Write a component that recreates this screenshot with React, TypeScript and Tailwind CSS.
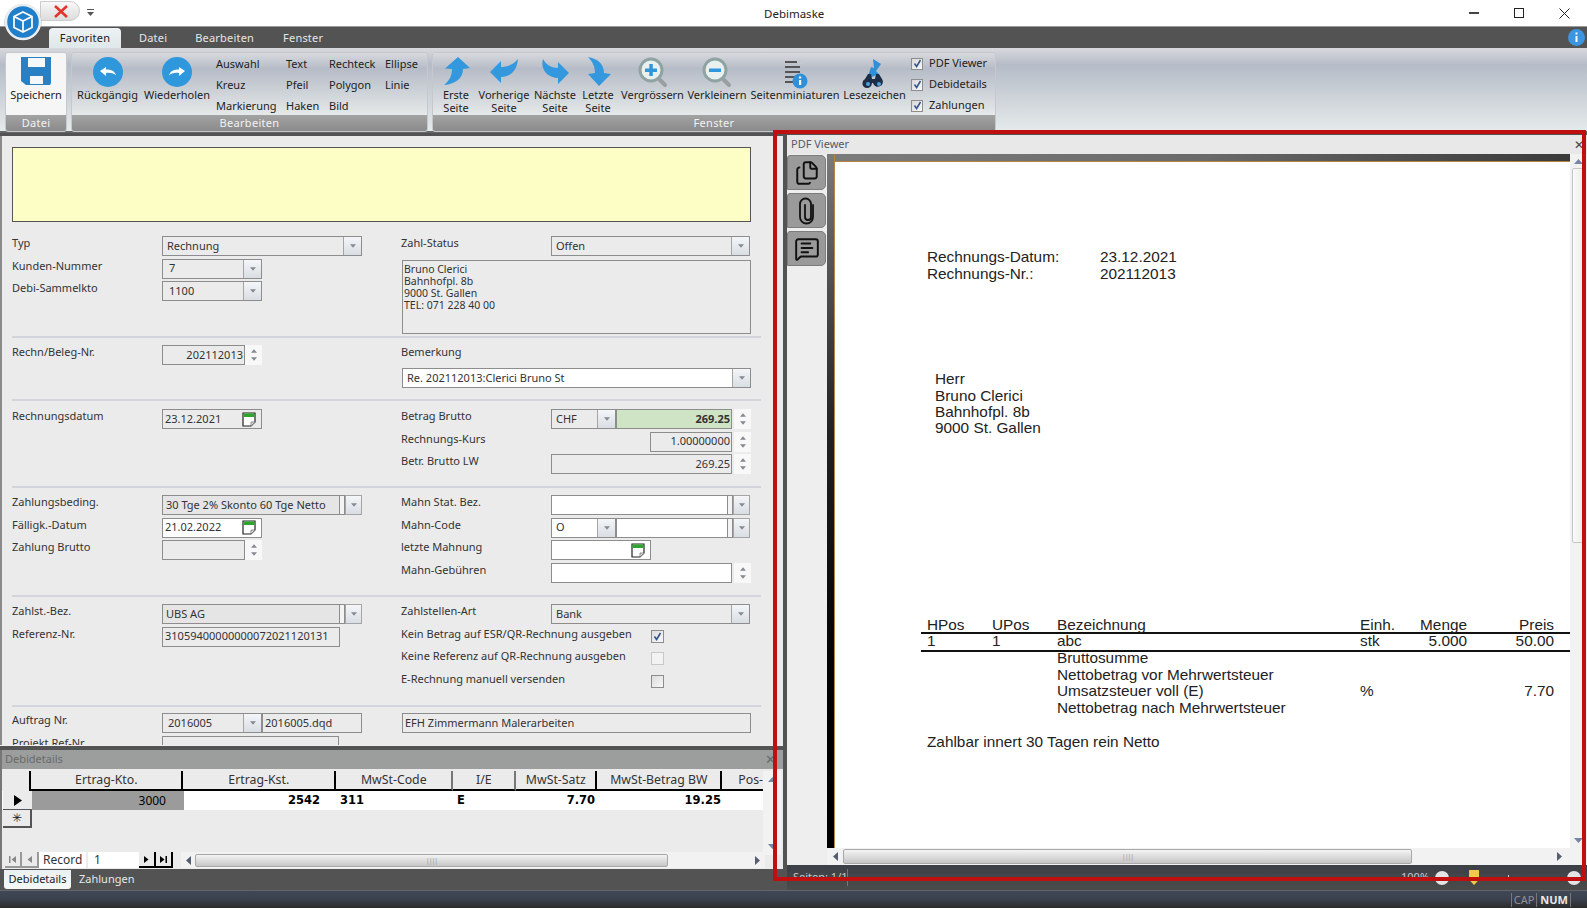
import type { ReactNode } from "react";
import { Files, MessageSquareText } from "lucide-react";

function ArrowDown({ className = "fill-[#858a92]" }: { className?: string }) {
	return (
		<svg width="6" height="4" viewBox="0 0 7 4" className={className}>
			<path d="M0 0h7L3.5 4z" />
		</svg>
	);
}

function ArrowUp() {
	return (
		<svg width="6" height="4" viewBox="0 0 7 4" className="fill-[#858a92]">
			<path d="M0 4h7L3.5 0z" />
		</svg>
	);
}

function Calendar() {
	return (
		<svg width="14" height="15" viewBox="0 0 14 15" className="shrink-0">
			<path d="M1 1h12v9l-4 4H1z" fill="#fff" stroke="#222" strokeWidth="1.2" />
			<rect x="1.5" y="1.5" width="11" height="3.5" fill="#2fa52f" />
			<path d="M9 14v-4h4" fill="#ddd" stroke="#777" strokeWidth="0.8" />
		</svg>
	);
}

function DropButton({ w = "w-[18px]" }: { w?: string }) {
	return (
		<div
			className={`${w} shrink-0 h-full flex items-center justify-center border-l border-[#a5a5a5] bg-linear-to-b from-[#f4f6f8] to-[#d9dee4]`}
		>
			<ArrowDown />
		</div>
	);
}

function Combo({
	value,
	w,
	white = false,
	align = "pl-[4px]",
}: {
	value?: string;
	w: string;
	white?: boolean;
	align?: string;
}) {
	return (
		<div
			className={`${w} h-[20px] flex items-center border border-[#8d8d8d] ${white ? "bg-white" : "bg-[#ebebeb]"}`}
		>
			<span className={`flex-1 truncate ${align}`}>{value}</span>
			<DropButton />
		</div>
	);
}

// combo whose text box and arrow button are split by a small strip
function SplitCombo({ value, w, white = false }: { value?: string; w: string; white?: boolean }) {
	return (
		<div className={`${w} h-[20px] flex`}>
			<div
				className={`flex-1 flex items-center pl-[3px] border border-[#8d8d8d] ${white ? "bg-white" : "bg-[#e5e5e5]"}`}
			>
				{value}
			</div>
			<div className="w-[5px] border-y border-r border-[#8d8d8d] bg-[#f4f4f4]" />
			<div className="w-[17px] h-full border-y border-r border-[#a5a5a5]">
				<DropButton w="w-full" />
			</div>
		</div>
	);
}

function Input({
	value,
	w,
	white = false,
	right = false,
	bold = false,
	bg,
}: {
	value?: string;
	w: string;
	white?: boolean;
	right?: boolean;
	bold?: boolean;
	bg?: string;
}) {
	return (
		<div
			className={`${w} h-[20px] flex items-center border border-[#8d8d8d] ${bg ?? (white ? "bg-white" : "bg-[#ebebeb]")} ${right ? "justify-end pr-[1px]" : "pl-[2px]"} ${bold ? "font-bold" : ""}`}
		>
			{value}
		</div>
	);
}

function Spinner() {
	return (
		<div className="w-[17px] h-[20px] shrink-0 flex flex-col items-center justify-around py-[2px] bg-[#f8f8f8]">
			<ArrowUp />
			<ArrowDown />
		</div>
	);
}

function DateField({ value, white = false }: { value?: string; white?: boolean }) {
	return (
		<div
			className={`w-[100px] h-[20px] flex items-center justify-between pl-[2px] pr-[5px] border border-[#8d8d8d] ${white ? "bg-white" : "bg-[#ebebeb]"}`}
		>
			<span>{value}</span>
			<Calendar />
		</div>
	);
}

function Row({ label, children }: { label: string; children?: ReactNode }) {
	return (
		<div className="h-[22.5px] flex items-start">
			<div className="w-[150px] shrink-0 leading-[14px] whitespace-nowrap">{label}</div>
			<div className="flex">{children}</div>
		</div>
	);
}

function Section({
	h,
	pt,
	left,
	right,
	last = false,
}: {
	h: string;
	pt: string;
	left: ReactNode;
	right: ReactNode;
	last?: boolean;
}) {
	return (
		<div className={`${h} ${pt} flex ${last ? "" : "border-b-2 border-[#d4d4dc]"}`}>
			<div className="w-[389px] shrink-0">{left}</div>
			<div className="flex-1">{right}</div>
		</div>
	);
}

function CheckRow({ label, checked = false, light = false }: { label: string; checked?: boolean; light?: boolean }) {
	return (
		<div className="h-[22.5px] flex items-start">
			<div className="w-[250px] shrink-0 leading-[14px] whitespace-nowrap">{label}</div>
			<div
				className={`w-[13px] h-[13px] mt-[3px] flex items-center justify-center border ${light ? "border-[#c8c8c8] bg-[#f3f3f3]" : "border-[#8d8d8d] bg-linear-to-br from-[#dcdcdc] to-[#f8f8f8]"}`}
			>
				{checked && (
					<svg width="9" height="9" viewBox="0 0 9 9" fill="none" stroke="#33558f" strokeWidth="1.6">
						<path d="M1.5 4.5 3.6 7.5 7.5 1" />
					</svg>
				)}
			</div>
		</div>
	);
}

function FormPane() {
	return (
		<div className="h-[609px] overflow-hidden bg-[#ebebeb] border-l-2 border-[#8a8a8a] pl-[10px] text-[#333] text-[11px]">
			<div className="pt-[11px] w-[739px]">
				<div className="h-[75px] bg-[#fdfdc6] border border-[#555]" />
			</div>
			<div className="w-[749px] mt-[14px]">
				<Section
					h="h-[102px]"
					pt=""
					left={
						<>
							<Row label="Typ">
								<Combo w="w-[200px]" value="Rechnung" />
							</Row>
							<Row label="Kunden-Nummer">
								<Combo w="w-[100px]" value="7" align="pl-[6px]" />
							</Row>
							<Row label="Debi-Sammelkto">
								<Combo w="w-[100px]" value="1100" align="pl-[6px]" />
							</Row>
						</>
					}
					right={
						<>
							<Row label="Zahl-Status">
								<Combo w="w-[199px]" value="Offen" />
							</Row>
							<div className="ml-[1px] w-[349px] h-[74px] mt-[1px] border border-[#8d8d8d] bg-[#ebebeb] pl-[1px] pt-[2px] leading-[12px] text-[10.5px]">
								<div>Bruno Clerici</div>
								<div>Bahnhofpl. 8b</div>
								<div>9000 St. Gallen</div>
								<div>TEL: 071 228 40 00</div>
							</div>
						</>
					}
				/>
				<Section
					h="h-[63px]"
					pt="pt-[7px]"
					left={
						<Row label="Rechn/Beleg-Nr.">
							<Input w="w-[83px]" value="202112013" right />
							<Spinner />
						</Row>
					}
					right={
						<>
							<div className="leading-[14px] h-[23px]">Bemerkung</div>
							<div className="ml-[1px]">
								<Combo w="w-[349px]" white value="Re. 202112013:Clerici Bruno St" />
							</div>
						</>
					}
				/>
				<Section
					h="h-[87px]"
					pt="pt-[8px]"
					left={
						<Row label="Rechnungsdatum">
							<DateField value="23.12.2021" />
						</Row>
					}
					right={
						<>
							<Row label="Betrag Brutto">
								<Combo w="w-[65px]" value="CHF" />
								<Input w="w-[116px]" value="269.25" right bold bg="bg-[#cfe4c4]" />
								<div className="w-[2px]" />
								<Spinner />
							</Row>
							<Row label="Rechnungs-Kurs">
								<div className="w-[99px]" />
								<Input w="w-[82px]" value="1.00000000" right />
								<div className="w-[2px]" />
								<Spinner />
							</Row>
							<Row label="Betr. Brutto LW">
								<Input w="w-[181px]" value="269.25" right />
								<div className="w-[2px]" />
								<Spinner />
							</Row>
						</>
					}
				/>
				<Section
					h="h-[109px]"
					pt="pt-[7px]"
					left={
						<>
							<Row label="Zahlungsbeding.">
								<SplitCombo w="w-[200px]" value="30 Tge 2% Skonto 60 Tge Netto" />
							</Row>
							<Row label="Fälligk.-Datum">
								<DateField value="21.02.2022" white />
							</Row>
							<Row label="Zahlung Brutto">
								<Input w="w-[83px]" />
								<Spinner />
							</Row>
						</>
					}
					right={
						<>
							<Row label="Mahn Stat. Bez.">
								<SplitCombo w="w-[199px]" white />
							</Row>
							<Row label="Mahn-Code">
								<Combo w="w-[65px]" value="O" white />
								<SplitCombo w="w-[134px]" white />
							</Row>
							<Row label="letzte Mahnung">
								<DateField white />
							</Row>
							<Row label="Mahn-Gebühren">
								<Input w="w-[181px]" white />
								<div className="w-[2px]" />
								<Spinner />
							</Row>
						</>
					}
				/>
				<Section
					h="h-[110px]"
					pt="pt-[7px]"
					left={
						<>
							<Row label="Zahlst.-Bez.">
								<SplitCombo w="w-[200px]" value="UBS AG" />
							</Row>
							<Row label="Referenz-Nr.">
								<Input w="w-[178px]" value="31059400000000072021120131" />
							</Row>
						</>
					}
					right={
						<>
							<Row label="Zahlstellen-Art">
								<Combo w="w-[199px]" value="Bank" />
							</Row>
							<CheckRow label="Kein Betrag auf ESR/QR-Rechnung ausgeben" checked />
							<CheckRow label="Keine Referenz auf QR-Rechnung ausgeben" light />
							<CheckRow label="E-Rechnung manuell versenden" />
						</>
					}
				/>
				<Section
					h="h-[40px]"
					pt="pt-[6px]"
					last
					left={
						<>
							<Row label="Auftrag Nr.">
								<Combo w="w-[100px]" value="2016005" align="pl-[5px]" />
								<Input w="w-[100px]" value="2016005.dqd" />
							</Row>
							<Row label="Projekt Ref-Nr.">
								<Input w="w-[177px]" />
							</Row>
						</>
					}
					right={
						<div className="ml-[1px]">
							<Input w="w-[349px]" value="EFH Zimmermann Malerarbeiten" />
						</div>
					}
				/>
			</div>
		</div>
	);
}

const columns = [
	{ label: "Ertrag-Kto.", w: "w-[152px]", sep: "border-black" },
	{ label: "Ertrag-Kst.", w: "w-[153px]", sep: "border-black" },
	{ label: "MwSt-Code", w: "w-[117px]", sep: "border-[#777]" },
	{ label: "I/E", w: "w-[63px]", sep: "border-[#777]" },
	{ label: "MwSt-Satz", w: "w-[81px]", sep: "border-black" },
	{ label: "MwSt-Betrag BW", w: "w-[125px]", sep: "border-black" },
];

function NavBtn({ d, dim = false }: { d: string; dim?: boolean }) {
	return (
		<div
			className={`w-[17px] h-[16px] flex items-center justify-center border-r-2 border-b-2 ${dim ? "border-[#999]" : "border-black"}`}
		>
			<svg width="9" height="9" viewBox="0 0 9 9" className={dim ? "fill-[#888]" : "fill-black"}>
				<path d={d} />
			</svg>
		</div>
	);
}

function ArrowUpBlue() {
	return (
		<svg width="9" height="5" viewBox="0 0 9 5" className="fill-[#7585a8]">
			<path d="M0 5h9L4.5 0z" />
		</svg>
	);
}

function ArrowDownBlue() {
	return (
		<svg width="9" height="5" viewBox="0 0 9 5" className="fill-[#7585a8]">
			<path d="M0 0h9L4.5 5z" />
		</svg>
	);
}

function DetailsPane() {
	return (
		<div className="flex-1 flex flex-col bg-[#ebebeb] border-l-2 border-[#777] min-h-0">
			<div className="h-[19px] shrink-0 bg-[#9c9e9d] flex items-center justify-between px-[3px] text-[11px] text-[#6a6a6a]">
				<span>Debidetails</span>
				<span className="text-[13px] mr-[4px] leading-none">✕</span>
			</div>
			<div className="h-[84px] flex shrink-0 mt-[2px]">
				<div className="w-[761px] shrink-0 overflow-hidden">
					<div className="flex h-[20px] text-[12.3px] text-[#333]">
						<div className="w-[30px] ml-[1px] border-r-2 border-black" />
						{columns.map((c) => (
							<div
								key={c.label}
								className={`${c.w} shrink-0 flex items-center justify-center border-r-2 ${c.sep} border-b-2 border-b-black pt-[1px]`}
							>
								{c.label}
							</div>
						))}
						<div className="flex-1 border-b-2 border-black pl-[16px] pt-[1px] whitespace-nowrap flex items-center">
							Pos-
						</div>
					</div>
					<div className="flex h-[19px] bg-white text-[11.5px] font-bold font-['DejaVu_Sans',sans-serif] text-black">
						<div className="w-[30px] ml-[1px] -mr-[1px] flex items-center justify-center border-r border-b border-[#555] bg-[#ebebeb]">
							<svg width="8" height="11" viewBox="0 0 8 11" className="fill-black">
								<path d="M0 0l8 5.5L0 11z" />
							</svg>
						</div>
						<div className="w-[152px] bg-[#9b9b9b] text-right pr-[18px] font-normal font-['Noto_Sans',sans-serif] text-[12px] leading-[19px]">
							3000
						</div>
						<div className="w-[153px] text-right pr-[17px] leading-[19px]">2542</div>
						<div className="w-[117px] pl-[3px] leading-[19px]">311</div>
						<div className="w-[63px] pl-[3px] leading-[19px]">E</div>
						<div className="w-[81px] text-right pr-[3px] leading-[19px]">7.70</div>
						<div className="w-[125px] text-right pr-[2px] leading-[19px]">19.25</div>
					</div>
					<div className="ml-[1px] w-[29px] h-[18px] flex items-center justify-center text-[12px] border-r-2 border-b-2 border-[#555] text-[#222]">
						✳
					</div>
				</div>
				<div className="flex-1 flex flex-col items-center justify-between py-[6px] bg-[#f2f2f2] mr-[2px]">
					<ArrowUpBlue />
					<ArrowDownBlue />
				</div>
			</div>
			<div className="h-[16px] flex shrink-0 mt-[-3px] text-[12px] text-[#333]">
				<div className="w-[3px]" />
				<NavBtn dim d="M1 1h1.5v7H1zM8 1v7L3.5 4.5z" />
				<NavBtn dim d="M7 1v7L2.5 4.5z" />
				<div className="w-[47px] bg-white pl-[4px] leading-[16px]">Record</div>
				<div className="w-[51px] ml-[2px] bg-white pl-[6px] leading-[16px]">1</div>
				<NavBtn d="M2 1v7l4.5-3.5z" />
				<NavBtn d="M1 1v7l4.5-3.5zM6.5 1H8v7H6.5z" />
				<div className="w-[8px]" />
				<div className="w-[584px] flex items-center bg-[#f2f2f2]">
					<div className="w-[14px] flex justify-center">
						<svg width="5" height="9" viewBox="0 0 5 9" className="fill-[#555d70]">
							<path d="M5 0v9L0 4.5z" />
						</svg>
					</div>
					<div className="w-[473px] h-[13px] border border-[#a8a8a8] rounded-[2px] bg-linear-to-b from-[#f4f4f4] to-[#c6c6c6] flex items-center justify-center text-[7px] tracking-[-1px] leading-none text-[#999]">
						||||
					</div>
					<div className="flex-1 flex justify-end pr-[5px]">
						<svg width="5" height="9" viewBox="0 0 5 9" className="fill-[#555d70]">
							<path d="M0 0v9l5-4.5z" />
						</svg>
					</div>
				</div>
			</div>
		</div>
	);
}

function PdfRow({ a, b, c, d, e, f }: { a?: string; b?: string; c?: string; d?: string; e?: string; f?: string }) {
	return (
		<div className="flex h-[16.8px] leading-[16.8px] pl-[6px]">
			<div className="w-[65px]">{a}</div>
			<div className="w-[65px]">{b}</div>
			<div className="w-[303px] whitespace-nowrap">{c}</div>
			<div className="w-[50px]">{d}</div>
			<div className="w-[57px] text-right">{e}</div>
			<div className="w-[87px] text-right">{f}</div>
		</div>
	);
}

function PaperclipIcon() {
	return (
		<svg width="15" height="28" viewBox="0 0 15 28" fill="none" stroke="#111" strokeWidth="1.8" strokeLinecap="round">
			<path d="M14 8v12a6.500 6.500 0 0 1-13 0V7a5.500 5.500 0 0 1 11 0v13a3 3 0 0 1-6 0V8" />
		</svg>
	);
}

function SideTab({ children }: { children: ReactNode }) {
	return (
		<div className="h-[35px] mb-[3px] mr-[1px] flex items-center justify-center bg-[#9a9a9a] border border-[#7d7d7d] rounded-r-[5px] rounded-tl-[3px]">
			{children}
		</div>
	);
}

function PdfViewer() {
	return (
		<div className="flex-1 flex flex-col min-w-0">
			<div className="h-[19px] shrink-0 mt-[2px] bg-[#e8e8e8] flex items-center justify-between pl-[4px] pr-[3px] text-[11px] text-[#555b68]">
				<span>PDF Viewer</span>
				<span className="text-[12px] leading-none text-[#444]">✕</span>
			</div>
			<div className="flex-1 flex min-h-0 bg-[#eeeeee]">
				<div className="w-[40px] shrink-0 pt-[1px]">
					<SideTab>
						<Files size={26} strokeWidth={1.8} color="#111" />
					</SideTab>
					<SideTab>
						<PaperclipIcon />
					</SideTab>
					<SideTab>
						<MessageSquareText size={26} strokeWidth={1.8} color="#111" />
					</SideTab>
				</div>
				<div className="flex-1 flex flex-col min-w-0">
					<div className="flex-1 flex min-h-0">
						<div className="w-[8px] shrink-0 bg-linear-to-b from-[#7b7b7b] via-[#222] via-40% to-black border-r border-[#b5843f]" />
						<div className="flex-1 flex flex-col min-w-0">
							<div className="h-[8px] shrink-0 bg-linear-to-r from-[#7b7b7b] via-[#6a6a6a] to-[#3a3a3a] border-b border-[#b5843f]" />
							<div className="flex-1 bg-white pl-[92px] pt-[87px] text-[15.35px] leading-[16.7px] text-[#222] font-['Liberation_Sans',sans-serif] overflow-hidden">
								<div className="flex">
									<div className="w-[173px]">Rechnungs-Datum:</div>
									<div>23.12.2021</div>
								</div>
								<div className="flex">
									<div className="w-[173px]">Rechnungs-Nr.:</div>
									<div>202112013</div>
								</div>
								<div className="ml-[8px] mt-[89px] leading-[16.2px]">
									<div>Herr</div>
									<div>Bruno Clerici</div>
									<div>Bahnhofpl. 8b</div>
									<div>9000 St. Gallen</div>
								</div>
								<div className="-ml-[6px] mt-[181px] w-[649px]">
									<PdfRow a="HPos" b="UPos" c="Bezeichnung" d="Einh." e="Menge" f="Preis" />
									<div className="h-[2px] -mt-[2px] bg-[#111]" />
									<div className="-mt-[1px]">
										<PdfRow a="1" b="1" c="abc" d="stk" e="5.000" f="50.00" />
									</div>
									<div className="h-[2px] bg-[#111]" />
									<div className="-mt-[2px]">
										<PdfRow c="Bruttosumme" />
									</div>
									<PdfRow c="Nettobetrag vor Mehrwertsteuer" />
									<PdfRow c="Umsatzsteuer voll (E)" d="%" f="7.70" />
									<PdfRow c="Nettobetrag nach Mehrwertsteuer" />
								</div>
								<div className="mt-[17px]">Zahlbar innert 30 Tagen rein Netto</div>
							</div>
						</div>
						<div className="w-[17px] shrink-0 bg-[#f2f2f2] flex flex-col items-center py-[5px]">
							<ArrowUpBlue />
							<div className="w-[13px] h-[375px] mt-[4px] border border-[#c6c6c6] rounded-[2px] bg-linear-to-r from-[#fafafa] to-[#ececec]" />
							<div className="flex-1" />
							<ArrowDownBlue />
						</div>
					</div>
					<div className="h-[17px] shrink-0 bg-[#f2f2f2] flex items-center">
						<div className="w-[17px] flex justify-center">
							<svg width="5" height="9" viewBox="0 0 5 9" className="fill-[#555d70]">
								<path d="M5 0v9L0 4.5z" />
							</svg>
						</div>
						<div className="w-[569px] h-[15px] ml-[-1px] border border-[#a8a8a8] rounded-[2px] bg-linear-to-b from-[#f4f4f4] to-[#c6c6c6] flex items-center justify-center text-[7px] tracking-[-1px] leading-none text-[#999]">
							||||
						</div>
						<div className="w-[150px] flex justify-end">
							<svg width="5" height="9" viewBox="0 0 5 9" className="fill-[#555d70]">
								<path d="M0 0v9l5-4.5z" />
							</svg>
						</div>
					</div>
				</div>
			</div>
			<div className="h-[25px] shrink-0 bg-linear-to-b from-[#3b4047] to-[#4b4b4b] flex items-center text-[11px] text-[#c8c8c8]">
				<span className="ml-[6px] w-[55px] border-r border-[#777] whitespace-nowrap">Seiten: 1/1</span>
				<span className="ml-[553px]">100%</span>
				<div className="ml-[6px] w-[14px] h-[14px] rounded-full bg-[#e4e4e4]" />
				<div className="ml-[20px] w-[10px] h-[15px] bg-[#f1c84c] [clip-path:polygon(0_0,100%_0,100%_65%,50%_100%,0_65%)]" />
				<div className="ml-[29px] w-[1px] h-[6px] bg-[#ccc]" />
				<div className="ml-[58px] w-[14px] h-[14px] rounded-full bg-[#e4e4e4]" />
			</div>
		</div>
	);
}

function Logo() {
	return (
		<div className="absolute left-[4px] top-[3px] w-[38px] h-[38px] z-10">
			<svg width="38" height="38" viewBox="0 0 38 38">
				<circle cx="19" cy="19.500" r="18.500" fill="#444" opacity="0.45" />
				<circle cx="19" cy="19" r="17" fill="#1f7fcb" stroke="#e9eef2" strokeWidth="2.500" />
				<path d="M19 9l9 4.500v11L19 29l-9-4.500v-11z" fill="none" stroke="#fff" strokeWidth="1.700" />
				<path d="M10 13.500l9 4.500 9-4.500M19 18v11" fill="none" stroke="#fff" strokeWidth="1.700" />
			</svg>
		</div>
	);
}

function WindowButtons() {
	return (
		<div className="flex items-center">
			<div className="w-[10px] h-[1.5px] bg-[#444]" />
			<div className="w-[10px] h-[10px] ml-[35px] border border-[#222]" />
			<svg width="11" height="11" viewBox="0 0 11 11" className="ml-[35px] mr-[17px]" stroke="#222">
				<path d="M.5.5l10 10M10.500.5l-10 10" />
			</svg>
		</div>
	);
}

function TopBar() {
	return (
		<div className="h-[27px] shrink-0 bg-white border-b border-[#999] flex items-center justify-between relative">
			<div className="ml-[40px] w-[40px] h-[20px] -mt-[4px] rounded-r-full bg-linear-to-b from-[#f8f8f8] to-[#dcdcdc] border border-[#ccc] flex items-center justify-center">
				<svg width="14" height="13" viewBox="0 0 14 13" stroke="#e0342c" strokeWidth="2.600" className="ml-[2px]">
					<path d="M1 1l12 11M13 1L1 12" />
				</svg>
			</div>
			<svg width="7" height="8" viewBox="0 0 7 8" className="absolute left-[87px] top-[9px] fill-[#555]">
				<path d="M0 0h7v1H0zM0 3h7L3.500 7z" />
			</svg>
			<div className="absolute left-[764px] top-[6px] text-[11.5px] text-[#222] leading-[16px]">Debimaske</div>
			<WindowButtons />
		</div>
	);
}

function TabBar() {
	return (
		<div className="h-[21px] shrink-0 bg-[#535353] flex items-end text-[11px] tracking-[0.2px] text-[#e6e6e6] relative">
			<div className="ml-[49px] w-[72px] h-[20px] rounded-t-[4px] bg-linear-to-b from-[#eef2f4] to-[#dfe8ea] text-[#222] flex items-center justify-center">
				Favoriten
			</div>
			<div className="h-[20px] ml-[18px] flex items-center">Datei</div>
			<div className="h-[20px] ml-[28px] flex items-center">Bearbeiten</div>
			<div className="h-[20px] ml-[29px] flex items-center">Fenster</div>
			<svg width="17" height="17" viewBox="0 0 17 17" className="absolute right-[2px] top-[2px]">
				<circle cx="8.500" cy="8.500" r="8.500" fill="#3b95e0" />
				<rect x="7.500" y="7" width="2" height="6" fill="#fff" />
				<rect x="7.500" y="3.500" width="2" height="2" fill="#fff" />
			</svg>
		</div>
	);
}

function RibbonGroup({
	title,
	w,
	active = false,
	children,
}: {
	title: string;
	w: string;
	active?: boolean;
	children: ReactNode;
}) {
	return (
		<div className={`${w} h-[80px] shrink-0 flex flex-col rounded-[3px] overflow-hidden border border-[#c5c8cc]`}>
			<div
				className={`flex-1 flex min-h-0 ${active ? "bg-[#f6f6f6]" : "bg-linear-to-b from-[#d8d9de] via-[#b6bcc7] via-25% to-[#e5e9e9]"}`}
			>
				{children}
			</div>
			<div className="h-[16px] pt-[1px] shrink-0 bg-linear-to-b from-[#a2a3a3] to-[#8b8b8b] flex items-center justify-center text-[11px] tracking-[0.3px] text-[#f2f2f2]">
				{title}
			</div>
		</div>
	);
}

function BigItem({ w, icon, lines }: { w: string; icon: ReactNode; lines: string[] }) {
	return (
		<div className={`${w} shrink-0 flex flex-col items-center`}>
			<div className="h-[36px] pt-[4px] flex items-start justify-center">{icon}</div>
			{lines.map((l) => (
				<div key={l} className="h-[12.5px] leading-[12.5px] whitespace-nowrap">
					{l}
				</div>
			))}
		</div>
	);
}

function UndoIcon({ flip = false }: { flip?: boolean }) {
	return (
		<svg width="30" height="30" viewBox="0 0 30 30" className={flip ? "-scale-x-100" : ""}>
			<circle cx="15" cy="15" r="15" fill="#2f97dc" />
			<path d="M7 14l6-4v2.500c5 0 9 1.500 10 6-2-2-5-3-10-2.500V19z" fill="#fff" />
		</svg>
	);
}

function FirstIcon() {
	return (
		<svg width="27" height="29" viewBox="0 0 27 29" fill="#3498de">
			<path d="M15 0l12 11-7 1c0 9-7 15-19 16 5-4 8-9 8-16l-7-.500z" />
		</svg>
	);
}

function PrevIcon() {
	return (
		<svg width="28" height="25" viewBox="0 0 28 25" fill="#3498de" className="mt-[2px]">
			<path d="M0 13L11 2v6c7 0 13-3 17-8-1 12-8 18-17 18v6z" />
		</svg>
	);
}

function NextIcon() {
	return (
		<svg width="28" height="25" viewBox="0 0 28 25" fill="#3498de" className="mt-[2px]">
			<path d="M28 14L17 3v6C11 9 5 6 2 0-1 11 7 19 17 19v6z" />
		</svg>
	);
}

function LastIcon() {
	return (
		<svg width="26" height="29" viewBox="0 0 26 29" fill="#3498de">
			<path d="M14 29L26 17l-7-1C19 8 14 2 3 0c5 5 7 10 7 16l-7 1z" />
		</svg>
	);
}

function ZoomIcon({ plus = false }: { plus?: boolean }) {
	return (
		<svg width="30" height="31" viewBox="0 0 30 31">
			<path d="M19 20l8 8" stroke="#98a0a0" strokeWidth="4" strokeLinecap="round" />
			<circle cx="13" cy="13" r="11" fill="#e9f0f0" stroke="#8fa3a3" strokeWidth="3" />
			<rect x="7" y="11.500" width="12" height="3.500" fill="#2f97dc" />
			{plus && <rect x="11.300" y="7" width="3.500" height="12" fill="#2f97dc" />}
		</svg>
	);
}

function ThumbsIcon() {
	return (
		<svg width="26" height="32" viewBox="0 0 26 32">
			<path d="M16 1l6 6h-6z" fill="#c5c8cc" />
			<path d="M3 5h12M3 10h15M3 15h15M3 20h13M3 25h11" stroke="#555" strokeWidth="2.200" />
			<circle cx="18" cy="24" r="7.500" fill="#2f8fd8" />
			<rect x="17" y="23" width="2.200" height="5" fill="#fff" />
			<rect x="17" y="19.500" width="2.200" height="2" fill="#fff" />
		</svg>
	);
}

function BookmarkIcon() {
	return (
		<svg width="26" height="32" viewBox="0 0 26 32">
			<path d="M11 2l8 5-5 7 3 3-12 5 4-12 3 1z" fill="#2f8fd8" />
			<path d="M2 30a5 5 0 0 1 1-8l3-5h3l1 5h3l1-5h3l3 5a5 5 0 1 1-9 4h-1a5 5 0 0 1-8 4z" fill="#1e2e46" />
			<circle cx="6" cy="27" r="2" fill="#4fa0de" />
			<circle cx="17" cy="27" r="2" fill="#4fa0de" />
		</svg>
	);
}

function SaveIcon() {
	return (
		<svg width="30" height="28" viewBox="0 0 30 28">
			<path d="M0 0h30v26l-1 2H5l-5-4z" fill="#2b7fc3" />
			<rect x="7" y="1" width="17" height="9" fill="#f5f8fb" />
			<rect x="9" y="19" width="13" height="8" fill="#f5f8fb" />
		</svg>
	);
}

function Ribbon() {
	const small = [
		{ w: "w-[70px]", items: ["Auswahl", "Kreuz", "Markierung"] },
		{ w: "w-[43px]", items: ["Text", "Pfeil", "Haken"] },
		{ w: "w-[56px]", items: ["Rechteck", "Polygon", "Bild"] },
		{ w: "w-[40px]", items: ["Ellipse", "Linie"] },
	];
	return (
		<div className="h-[85px] shrink-0 bg-linear-to-b from-[#d8d9de] via-[#b6bcc7] via-20% to-[#e5ebeb] border-b-2 border-[#666] pt-[4px] pl-[5px] flex gap-[4px] text-[11px] text-[#222]">
			<RibbonGroup title="Datei" w="w-[62px]" active>
				<BigItem w="w-full" icon={<SaveIcon />} lines={["Speichern"]} />
			</RibbonGroup>
			<RibbonGroup title="Bearbeiten" w="w-[357px]">
				<BigItem w="w-[71px]" icon={<UndoIcon />} lines={["Rückgängig"]} />
				<BigItem w="w-[68px]" icon={<UndoIcon flip />} lines={["Wiederholen"]} />
				<div className="flex pl-[5px]">
					{small.map((col) => (
						<div key={col.items[0]} className={`${col.w} shrink-0`}>
							{col.items.map((t) => (
								<div key={t} className="h-[21px] leading-[21px] whitespace-nowrap">
									{t}
								</div>
							))}
						</div>
					))}
				</div>
			</RibbonGroup>
			<RibbonGroup title="Fenster" w="w-[564px]">
				<div className="w-[5px]" />
				<BigItem w="w-[36px]" icon={<FirstIcon />} lines={["Erste", "Seite"]} />
				<BigItem w="w-[60px]" icon={<PrevIcon />} lines={["Vorherige", "Seite"]} />
				<BigItem w="w-[42px]" icon={<NextIcon />} lines={["Nächste", "Seite"]} />
				<BigItem w="w-[44px]" icon={<LastIcon />} lines={["Letzte", "Seite"]} />
				<BigItem w="w-[65px]" icon={<ZoomIcon plus />} lines={["Vergrössern"]} />
				<BigItem w="w-[64px]" icon={<ZoomIcon />} lines={["Verkleinern"]} />
				<BigItem w="w-[92px]" icon={<ThumbsIcon />} lines={["Seitenminiaturen"]} />
				<BigItem w="w-[67px]" icon={<BookmarkIcon />} lines={["Lesezeichen"]} />
				<div className="pl-[3px]">
					{["PDF Viewer", "Debidetails", "Zahlungen"].map((t) => (
						<div key={t} className="h-[21px] flex items-center gap-[6px] whitespace-nowrap">
							<div className="w-[12px] h-[12px] border border-[#8d8d8d] bg-linear-to-br from-[#d8d8d8] to-[#f8f8f8] flex items-center justify-center">
								<svg width="9" height="9" viewBox="0 0 9 9" fill="none" stroke="#33558f" strokeWidth="1.500">
									<path d="M1.500 4.500 3.600 7.500 7.500 1" />
								</svg>
							</div>
							{t}
						</div>
					))}
				</div>
			</RibbonGroup>
		</div>
	);
}

export default function App() {
	return (
		<div className="relative w-[1587px] h-[908px] overflow-hidden flex flex-col font-['Noto_Sans',sans-serif]">
			<Logo />
			<TopBar />
			<TabBar />
			<Ribbon />
			<div className="flex-1 flex min-h-0 bg-[#535353]">
				<div className="w-[783px] shrink-0 flex flex-col pt-[3px]">
					<FormPane />
					<div className="h-[5px] shrink-0 bg-[#535353] border-t border-[#eee]" />
					<DetailsPane />
					<div className="h-[21px] pt-[1px] shrink-0 flex items-start pl-[4px] text-[11px] text-[#e6e6e6]">
						<div className="w-[67px] h-[19px] rounded-b-[3px] bg-linear-to-b from-[#eaf0f2] to-[#f6f8f8] text-[#222] flex items-center justify-center">
							Debidetails
						</div>
						<div className="ml-[8px] h-[19px] flex items-center">Zahlungen</div>
					</div>
				</div>
				<div className="w-[4px] shrink-0" />
				<PdfViewer />
			</div>
			<div className="h-[18px] shrink-0 bg-linear-to-b from-[#404858] via-[#3a404c] to-[#2b2b2b] border-t border-[#666] flex items-center justify-end text-[11px] text-[#8f9298]">
				<span className="border-x border-[#777] px-[2px] leading-[14px]">CAP</span>
				<span className="ml-[3px] font-bold text-[#e8e8e8] leading-[14px] border-r border-[#777] pr-[2px]">NUM</span>
				<div className="w-[16px]" />
			</div>
			<div className="absolute left-[773px] top-[130px] w-[813px] h-[751px] border-4 border-[#c00f0f] pointer-events-none" />
		</div>
	);
}
